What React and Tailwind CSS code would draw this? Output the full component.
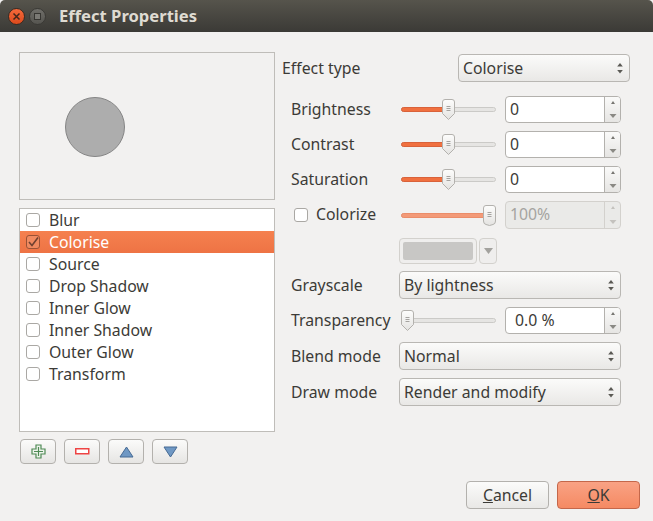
const FONT = "font-['Noto_Sans','Open_Sans',sans-serif]";

const effects = ['Blur', 'Colorise', 'Source', 'Drop Shadow', 'Inner Glow', 'Inner Shadow', 'Outer Glow', 'Transform'];

function UpDown() {
  return (
    <svg width="8" height="16" viewBox="0 0 8 16" className="shrink-0">
      <path d="M4 3 L6.8 6.5 H1.2 Z" fill="#5a5954" />
      <path d="M4 13.5 L6.8 10 H1.2 Z" fill="#5a5954" />
    </svg>
  );
}

function Select({ label, className }) {
  return (
    <div className={`h-[28px] flex items-center justify-between pl-[4px] pr-[5px] rounded-[4px] border border-[#b9b7b3] bg-gradient-to-b from-[#fbfbfa] to-[#e9e8e6] text-[15.8px] text-[#3c3b37] ${className}`}>
      <span className="pt-[2px]">{label}</span>
      <UpDown />
    </div>
  );
}

function Spinner({ value, disabled, center }) {
  return (
    <div className={`w-[116px] flex rounded-[4px] border ${disabled ? 'h-[28px] border-[#d3d1cd] bg-[#eaeae8] text-[#a5a4a0]' : 'h-[27px] border-[#b3b1ad] bg-white text-[#3c3b37]'}`}>
      <div className={`w-[98px] flex items-center text-[15.8px] ${center ? 'pl-[9px]' : 'pl-[4px]'}`}>{value}</div>
      <div className={`w-[16px] flex flex-col items-center justify-between py-[3px] rounded-r-[3px] border-l ${disabled ? 'border-[#d3d1cd]' : 'border-[#b3b1ad] bg-gradient-to-b from-[#fafaf9] to-[#e6e5e3]'}`}>
        <svg width="6" height="5" viewBox="0 0 6 5"><path d="M3 1 L5 4 H1 Z" fill={disabled ? '#c4c2be' : '#777671'} /></svg>
        <svg width="8" height="6" viewBox="0 0 8 6"><path d="M4 5 L7.5 1 H.5 Z" fill={disabled ? '#c4c2be' : '#8a8984'} /></svg>
      </div>
    </div>
  );
}

function Thumb({ left, round }) {
  return (
    <svg width="13" height="21" viewBox="0 0 13 21" className="absolute top-0" style={{ left }}>
      <defs>
        <linearGradient id="thumbfill" x1="0" y1="0" x2="0" y2="1">
          <stop offset="0" stopColor="#fdfdfc" />
          <stop offset="1" stopColor="#e4e3e1" />
        </linearGradient>
      </defs>
      <path
        d={round ? 'M3 .5 H10 Q12.5 .5 12.5 3 V16 Q12.5 19 10 19.5 L6.5 20.5 L3 19.5 Q.5 19 .5 16 V3 Q.5 .5 3 .5 Z' : 'M3 .5 H10 Q12.5 .5 12.5 3 V14.5 L6.5 20.5 L.5 14.5 V3 Q.5 .5 3 .5 Z'}
        fill="url(#thumbfill)"
        stroke="#b3b1ad"
      />
      <path d="M4.5 7.5 H8.5 M4.5 9.5 H8.5 M4.5 11.5 H8.5" stroke="#a5a3a0" strokeWidth="1" />
    </svg>
  );
}

function Slider({ percent, thumbLeft, round, muted }) {
  return (
    <div className="relative w-[95px] h-[21px] shrink-0">
      <div className="absolute left-0 right-0 top-[8px] h-[5px] rounded-full bg-[#e6e5e3] border border-[#cbcac7]" />
      {percent > 0 && (
        <div
          className={`absolute left-0 top-[8px] h-[5px] rounded-full border ${muted ? 'bg-[#f39a78] border-[#ea8d6a]' : 'bg-[#f0703f] border-[#d9623a]'}`}
          style={{ width: `${percent}%` }}
        />
      )}
      <Thumb left={thumbLeft} round={round} />
    </div>
  );
}

function SliderRow({ label, children }) {
  return (
    <div className="min-h-[27px] flex items-center">
      <span className="w-[110px] shrink-0 text-[15.8px] text-[#3c3b37]">{label}</span>
      {children}
    </div>
  );
}

function SelectRow({ label, value }) {
  return (
    <div className="flex items-center">
      <span className="w-[108px] shrink-0 pt-[2px] text-[15.8px] text-[#3c3b37]">{label}</span>
      <Select label={value} className="flex-1" />
    </div>
  );
}

function ToolButton({ children }) {
  return (
    <button className="w-[36px] h-[25px] flex items-center justify-center rounded-[4px] border border-[#b3b1ad] bg-gradient-to-b from-[#fbfbfa] to-[#e6e5e3]">
      {children}
    </button>
  );
}

function EffectList() {
  return (
    <div className="mt-[8px] h-[224px] border border-[#bfbdb9] bg-white text-[15.8px] text-[#3c3b37]">
      {effects.map((name) => {
        const on = name === 'Colorise';
        return (
          <div key={name} className={`h-[22px] flex items-center pl-[6px] ${on ? 'bg-gradient-to-b from-[#f5814f] to-[#ee7344] text-white' : ''}`}>
            <span className={`w-[14px] h-[14px] rounded-[3px] border flex items-center justify-center ${on ? 'border-[#9a5236] bg-[#f08a60]' : 'border-[#aaa8a4] bg-white'}`}>
              {on && (
                <svg width="12" height="12" viewBox="0 0 12 12">
                  <path d="M2 6 L5 9.5 L11 1.5" fill="none" stroke="#6f4030" strokeWidth="1.6" />
                </svg>
              )}
            </span>
            <span className="ml-[9px] pt-[2px]">{name}</span>
          </div>
        );
      })}
    </div>
  );
}

export default function App() {
  return (
    <div className={`w-[653px] h-[521px] flex flex-col bg-[#f2f1f0] overflow-hidden ${FONT}`}>
      {/* title bar */}
      <div className="h-[32px] shrink-0 flex items-center rounded-t-[5px] bg-gradient-to-b from-[#56544c] to-[#3b3a36]">
        <div className="ml-[8px] w-[17px] h-[17px] rounded-full bg-gradient-to-b from-[#f5693a] to-[#dd4a1c] border border-[#3a2a22] flex items-center justify-center">
          <svg width="9" height="9" viewBox="0 0 9 9"><path d="M1.5 1.5 L7.5 7.5 M7.5 1.5 L1.5 7.5" stroke="#43261a" strokeWidth="1.5" /></svg>
        </div>
        <div className="ml-[4px] w-[17px] h-[17px] rounded-full bg-gradient-to-b from-[#6f6e69] to-[#565550] border border-[#3a3935] flex items-center justify-center">
          <span className="block w-[7px] h-[7px] border border-[#363531] bg-[#7a7974]" />
        </div>
        <span className="ml-[13px] text-[16.6px] font-bold text-[#dfdbd2]">Effect Properties</span>
      </div>

      {/* body */}
      <div className="flex-1 flex pl-[19px] pt-[20px]">
        <div className="w-[256px] shrink-0">
          <div className="h-[148px] flex items-start border border-[#bfbdb9]">
            <div className="ml-[45px] mt-[44px] w-[60px] h-[60px] rounded-full bg-[#adadad] border border-[#858585]" />
          </div>
          <EffectList />
          <div className="mt-[7px] pl-[1px] flex gap-[8px]">
            <ToolButton>
              <svg width="15" height="15" viewBox="0 0 15 15">
                <path d="M5 1 H10 V5 H14 V10 H10 V14 H5 V10 H1 V5 H5 Z" fill="#eef4ec" stroke="#4f8a55" strokeWidth="1.2" />
                <path d="M7.5 3 V12 M3 7.5 H12" stroke="#4f8a55" strokeWidth="1.2" />
              </svg>
            </ToolButton>
            <ToolButton>
              <svg width="15" height="7" viewBox="0 0 15 7">
                <rect x=".75" y=".75" width="13" height="5" fill="#fff" stroke="#ee4444" strokeWidth="1.5" />
              </svg>
            </ToolButton>
            <ToolButton>
              <svg width="15" height="12" viewBox="0 0 15 12">
                <path d="M7.5 1 L14 11 H1 Z" fill="#6f98c4" stroke="#466a94" />
              </svg>
            </ToolButton>
            <ToolButton>
              <svg width="15" height="12" viewBox="0 0 15 12">
                <path d="M7.5 11 L14 1 H1 Z" fill="#6f98c4" stroke="#466a94" />
              </svg>
            </ToolButton>
          </div>
        </div>

        <div className="ml-[7px] w-[348px]">
          <div className="mt-[2px] flex items-center justify-between">
            <span className="pt-[2px] text-[15.8px] text-[#3c3b37]">Effect type</span>
            <Select label="Colorise" className="w-[172px]" />
          </div>

          <div className="mt-[14px] ml-[9px] w-[330px] flex flex-col gap-[8px]">
            <SliderRow label="Brightness">
              <Slider percent={47} thumbLeft={41} />
              <div className="ml-[9px]"><Spinner value="0" /></div>
            </SliderRow>
            <SliderRow label="Contrast">
              <Slider percent={47} thumbLeft={41} />
              <div className="ml-[9px]"><Spinner value="0" /></div>
            </SliderRow>
            <SliderRow label="Saturation">
              <Slider percent={47} thumbLeft={41} />
              <div className="ml-[9px]"><Spinner value="0" /></div>
            </SliderRow>
            <SliderRow
              label={
                <span className="flex items-center">
                  <span className="ml-[3px] w-[14px] h-[14px] rounded-[3px] border border-[#aaa8a4] bg-white" />
                  <span className="ml-[8px]">Colorize</span>
                </span>
              }
            >
              <Slider percent={95} thumbLeft={82} round muted />
              <div className="ml-[9px]"><Spinner value="100%" disabled /></div>
            </SliderRow>
          </div>

          <div className="mt-[9px] ml-[117px] flex gap-[2px]">
            <div className="w-[78px] h-[26px] p-[3px] rounded-[4px] border border-[#d3d1cd] bg-[#efeeed]">
              <div className="h-full rounded-[2px] bg-[#c8c7c5]" />
            </div>
            <div className="w-[18px] h-[26px] flex items-center justify-center rounded-[4px] border border-[#d3d1cd] bg-[#efeeed]">
              <svg width="9" height="6" viewBox="0 0 9 6"><path d="M4.5 6 L9 0 H0 Z" fill="#a3a29e" /></svg>
            </div>
          </div>

          <div className="mt-[7px] ml-[9px] w-[330px] flex flex-col gap-[8px]">
            <SelectRow label="Grayscale" value="By lightness" />
            <SliderRow label="Transparency">
              <Slider percent={0} thumbLeft={0} />
              <div className="ml-[9px]"><Spinner value="0.0 %" center /></div>
            </SliderRow>
            <SelectRow label="Blend mode" value="Normal" />
            <SelectRow label="Draw mode" value="Render and modify" />
          </div>
        </div>
      </div>

      {/* dialog buttons */}
      <div className="shrink-0 flex justify-end gap-[8px] pr-[13px] pb-[12px] text-[15.8px]">
        <button className="w-[83px] h-[28px] pt-[1px] rounded-[4px] border border-[#b3b1ad] bg-gradient-to-b from-[#fbfbfa] to-[#e9e8e6] text-[#3c3b37]">
          <span className="underline">C</span>ancel
        </button>
        <button className="w-[83px] h-[28px] pt-[1px] rounded-[4px] border border-[#c4674a] bg-gradient-to-b from-[#f9a284] to-[#f58a63] text-[#3c3b37]">
          <span className="underline">O</span>K
        </button>
      </div>
    </div>
  );
}
